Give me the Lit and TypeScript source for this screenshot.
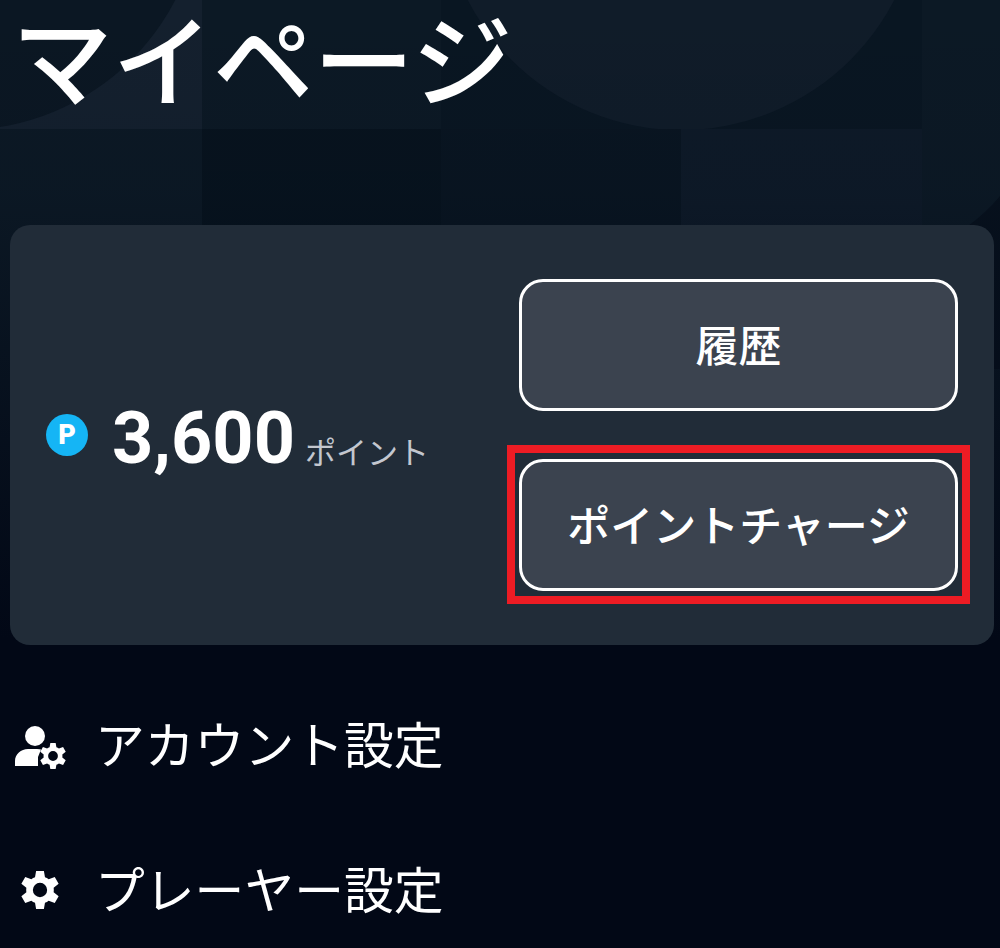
import { LitElement, html, css, svg } from 'lit';
import { customElement } from 'lit/decorators.js';

const gear = svg`<path fill-rule="evenodd" d="M10.200 3.200h3.600l.5 2.900c.6.2 1.200.5 1.700.9l2.800-1 1.800 3.100-2.300 1.900a7.400 7.400 0 0 1 0 2l2.300 1.900-1.800 3.100-2.800-1c-.5.4-1.100.7-1.700.9l-.5 2.900h-3.600l-.5-2.900c-.6-.2-1.200-.5-1.700-.9l-2.800 1-1.800-3.100 2.300-1.900a7.400 7.400 0 0 1 0-2L3.400 9.100l1.800-3.100 2.800 1c.5-.4 1.100-.7 1.700-.9zM12 8.700a3.300 3.300 0 1 0 0 6.600 3.300 3.300 0 0 0 0-6.600z"/>`;

@customElement('app-root')
export class AppRoot extends LitElement {
  static override styles = css`
    :host {
      display: block;
      position: relative;
      height: 948px;
      overflow: hidden;
      background: #020816;
      color: #fff;
      font-family: 'Noto Sans CJK JP', 'Noto Sans', sans-serif;
    }

    .backdrop {
      position: absolute;
      top: 0;
      left: 0;
      width: 1000px;
      height: 640px;
    }

    .page {
      position: relative;
      display: flex;
      flex-direction: column;
    }

    h1 {
      margin: 0;
      height: 225px;
      padding: 0 0 0 12px;
      font-size: 100.5px;
      line-height: 110px;
      font-weight: 500;
    }

    .card {
      display: flex;
      align-items: center;
      justify-content: space-between;
      height: 420px;
      margin: 0 6px 0 10px;
      padding: 0 36px;
      box-sizing: border-box;
      border-radius: 20px;
      background: #212c38;
    }

    .balance {
      display: flex;
      align-items: center;
    }

    .coin {
      display: flex;
      align-items: center;
      justify-content: center;
      width: 42px;
      height: 42px;
      border-radius: 50%;
      background: #15b5f5;
      font-family: 'Roboto', sans-serif;
      font-size: 27px;
      font-weight: 900;
    }

    .amount {
      margin: 8px 0 0 24px;
      font-family: 'Roboto', sans-serif;
      font-size: 72px;
      font-weight: 700;
      line-height: 80px;
    }

    .unit {
      margin: 32px 0 0 10px;
      font-size: 31px;
      line-height: 40px;
      color: #c3c7cf;
    }

    .actions {
      display: flex;
      flex-direction: column;
      gap: 48px;
    }

    button {
      width: 439px;
      height: 132px;
      box-sizing: border-box;
      border: 3px solid #fff;
      border-radius: 24px;
      background: #3b434f;
      color: #fff;
      font-family: inherit;
      font-size: 43px;
      font-weight: 500;
      padding: 0 0 5px;
    }

    .charge {
      position: relative;
    }

    .charge::after {
      content: '';
      position: absolute;
      inset: -17px -15px -16px;
      border: 8px solid #ed1c24;
      pointer-events: none;
    }

    .menu {
      display: flex;
      flex-direction: column;
      padding: 24px 0 0 15px;
    }

    .row {
      display: flex;
      align-items: center;
      height: 145px;
      font-size: 49.8px;
      font-weight: 400;
    }

    .row svg {
      width: 52px;
      height: 52px;
      margin: 7px 28px 0 0;
      fill: #fff;
    }

    .row .solo {
      margin: 7px 29.500px 0 -1.500px;
    }
  `;

  private renderBackdrop() {
    return html`<svg class="backdrop" viewBox="0 0 1000 640">
      <defs>
        <linearGradient id="fade" x1="0" y1="0" x2="0" y2="1">
          <stop offset="0" stop-color="#020816" stop-opacity="0" />
          <stop offset="0.3" stop-color="#020816" stop-opacity="0.08" />
          <stop offset="1" stop-color="#020816" stop-opacity="1" />
        </linearGradient>
      </defs>
      <rect width="1000" height="640" fill="#0c1925" />
      <rect x="-38" y="-110" width="240" height="239" fill="#14202e" />
      <circle cx="-38" cy="-110" r="240" fill="#0b1723" />
      <rect x="441" y="-110" width="481" height="239" fill="#091622" />
      <circle cx="681" cy="-110" r="240" fill="#101c29" />
      <rect x="202" y="129" width="239" height="240" fill="#07131e" />
      <rect x="441" y="129" width="240" height="240" fill="#091521" />
      <rect x="681" y="129" width="241" height="240" fill="#0e1a28" />
      <path d="M1000 196Q987 212 968 226V369H1000z" fill="#07111d" />
      <rect width="1000" height="640" fill="url(#fade)" />
    </svg>`;
  }

  override render() {
    return html`
      ${this.renderBackdrop()}
      <div class="page">
        <h1>マイページ</h1>
        <section class="card">
          <div class="balance">
            <span class="coin">P</span>
            <span class="amount">3,600</span>
            <span class="unit">ポイント</span>
          </div>
          <div class="actions">
            <button>履歴</button>
            <button class="charge">ポイントチャージ</button>
          </div>
        </section>
        <nav class="menu">
          <div class="row">
            <svg viewBox="0 0 52 52" style="overflow: visible">
              <circle cx="20" cy="17" r="10" />
              <path d="M0 47V42C0 35 6 30 13 30H22q3 0 4 .5L23 38v9z" />
              <g transform="translate(20.240 19.240) scale(1.480)">${gear}</g>
            </svg>
            アカウント設定
          </div>
          <div class="row">
            <svg class="solo" viewBox="0 0 24 24">${gear}</svg>
            プレーヤー設定
          </div>
        </nav>
      </div>
    `;
  }
}

declare global {
  interface HTMLElementTagNameMap {
    'app-root': AppRoot;
  }
}
